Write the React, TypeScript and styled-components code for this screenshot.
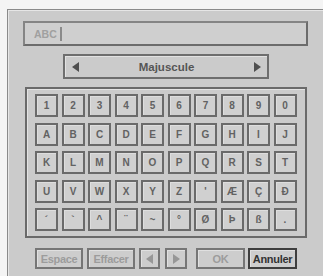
import styled, { createGlobalStyle } from "styled-components";

const GlobalStyle = createGlobalStyle`
  html, body {
    margin: 0;
    padding: 0;
    background: #f4f4f4;
    overflow: hidden;
  }
  body {
    font-family: "Liberation Sans", Arial, sans-serif;
  }
`;

const Panel = styled.div`
  margin: 9px 0 0 7px;
  width: 330px;
  height: 280px;
  box-sizing: border-box;
  background: #cbcbcb;
  border-top: 1px solid #8a8a8a;
  border-left: 1px solid #8a8a8a;
  box-shadow: inset 1px 1px 0 #e6e6e6;
  padding: 11px 0 0 15px;
  display: flex;
  flex-direction: column;
  align-items: flex-start;
`;

const Input = styled.div`
  width: 285px;
  height: 25px;
  box-sizing: border-box;
  border: 2px solid #858585;
  border-right-color: #6c6c6c;
  border-bottom-color: #6c6c6c;
  background: #cfcfcf;
  display: flex;
  align-items: center;
  padding-left: 9px;
  gap: 3px;
  font-size: 10.5px;
  font-weight: bold;
  color: #a0a0a0;
`;

const Cursor = styled.span`
  width: 2px;
  height: 14px;
  background: #8a8a8a;
`;

const Selector = styled.div`
  margin: 8px 0 0 40px;
  width: 206px;
  height: 25px;
  box-sizing: border-box;
  border: 2px solid #6e6e6e;
  box-shadow: inset 1px 1px 0 #e2e2e2;
  display: flex;
  align-items: center;
  justify-content: space-between;
  padding: 0 6px 0 7px;
  font-size: 11.5px;
  font-weight: bold;
  color: #555555;
`;

const Keyboard = styled.div`
  margin: 8px 0 0 2px;
  width: 282px;
  height: 151px;
  box-sizing: border-box;
  border: 2px solid #6a6a6a;
  box-shadow: inset 1px 1px 0 #e3e3e3;
  padding: 5px 0 0 8px;
  display: grid;
  grid-template-columns: repeat(10, 23px);
  grid-auto-rows: 23px;
  column-gap: 3.5px;
  row-gap: 5.5px;
`;

const Key = styled.div`
  box-sizing: border-box;
  border: 2px solid #6a6a6a;
  box-shadow: inset 1px 1px 0 #dedede;
  background: #d0d0d0;
  display: flex;
  align-items: center;
  justify-content: center;
  font-size: 10px;
  font-weight: bold;
  color: #626262;
`;

const BottomRow = styled.div`
  margin: 10px 0 0 12px;
  display: flex;
  height: 21px;
`;

const Button = styled.div<{ $w: number; $gap: number; $focus?: boolean }>`
  width: ${({ $w }) => $w}px;
  margin-left: ${({ $gap }) => $gap}px;
  box-sizing: border-box;
  border: 2px solid ${({ $focus }) => ($focus ? "#3e3e3e" : "#767676")};
  box-shadow: inset 1px 1px 0 #e0e0e0;
  background: #cdcdcd;
  display: flex;
  align-items: center;
  justify-content: center;
  font-size: 11px;
  font-weight: bold;
  letter-spacing: -0.3px;
  color: ${({ $focus }) => ($focus ? "#333333" : "#9c9c9c")};
  white-space: nowrap;
`;

const Arrow = ({ dir, color }: { dir: "left" | "right"; color: string }) => (
  <svg width="7" height="10" viewBox="0 0 7 10">
    <polygon
      points={dir === "left" ? "7,0 7,10 0,5" : "0,0 0,10 7,5"}
      fill={color}
    />
  </svg>
);

const rows = [
  ["1", "2", "3", "4", "5", "6", "7", "8", "9", "0"],
  ["A", "B", "C", "D", "E", "F", "G", "H", "I", "J"],
  ["K", "L", "M", "N", "O", "P", "Q", "R", "S", "T"],
  ["U", "V", "W", "X", "Y", "Z", "'", "Æ", "Ç", "Ð"],
  ["´", "`", "^", "¨", "~", "°", "Ø", "Þ", "ß", "."],
];

export default function App() {
  return (
    <>
      <GlobalStyle />
      <Panel>
        <Input>
          ABC
          <Cursor />
        </Input>
        <Selector>
          <Arrow dir="left" color="#4f4f4f" />
          Majuscule
          <Arrow dir="right" color="#4f4f4f" />
        </Selector>
        <Keyboard>
          {rows.flat().map((k, i) => (
            <Key key={i}>{k}</Key>
          ))}
        </Keyboard>
        <BottomRow>
          <Button $w={48} $gap={0}>Espace</Button>
          <Button $w={48} $gap={4}>Effacer</Button>
          <Button $w={21} $gap={4}>
            <Arrow dir="left" color="#979797" />
          </Button>
          <Button $w={22} $gap={5}>
            <Arrow dir="right" color="#979797" />
          </Button>
          <Button $w={49} $gap={9}>OK</Button>
          <Button $w={49} $gap={3} $focus>
            Annuler
          </Button>
        </BottomRow>
      </Panel>
    </>
  );
}
